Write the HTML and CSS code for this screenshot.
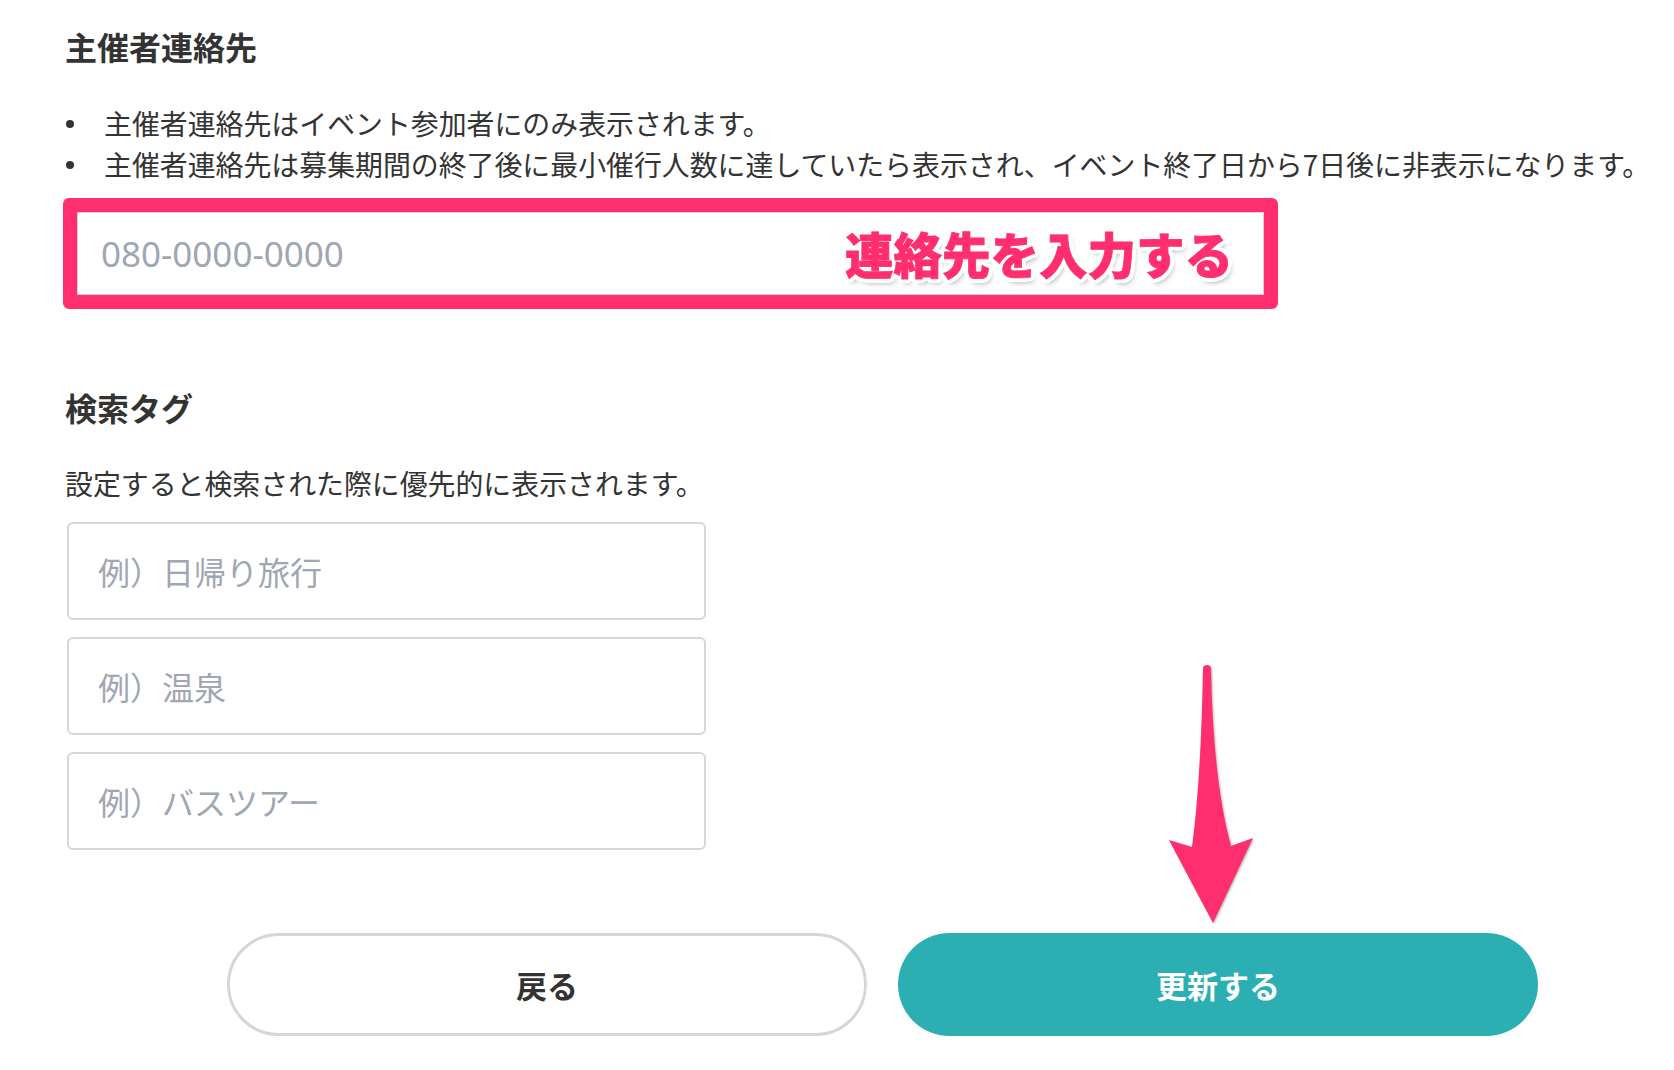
FILE: index.html
```html
<!DOCTYPE html>
<html lang="ja">
<head>
<meta charset="utf-8">
<title>イベント編集</title>
<link rel="stylesheet" href="styles.css">
</head>
<body>
<div class="page">
  <section class="sec contact">
    <h2 class="title">主催者連絡先</h2>
    <ul class="notes">
      <li>主催者連絡先はイベント参加者にのみ表示されます。</li>
      <li>主催者連絡先は募集期間の終了後に最小催行人数に達していたら表示され、イベント終了日から7日後に非表示になります。</li>
    </ul>
    <div class="highlight">
      <input class="phone-input" type="text" placeholder="080-0000-0000">
      <span class="callout">連絡先を入力する</span>
    </div>
  </section>

  <section class="sec tags">
    <h2 class="title title-tags">検索タグ</h2>
    <p class="desc">設定すると検索された際に優先的に表示されます。</p>
    <div class="tag-list">
      <input class="tag-input" type="text" placeholder="例）日帰り旅行">
      <input class="tag-input" type="text" placeholder="例）温泉">
      <input class="tag-input" type="text" placeholder="例）バスツアー">
    </div>
  </section>

  <div class="actions">
    <button class="btn btn-back" type="button">戻る</button>
    <button class="btn btn-submit" type="button">更新する</button>
  </div>

  <svg class="arrow" width="100" height="270" viewBox="0 0 100 270" aria-hidden="true">
    <path d="M43 9 A4 4 0 0 1 51 9 Q53 120 71 186 L93 178 L53 263 L9 180 L32 187 Q41 120 43 9 Z" fill="#ff2e6e"/>
  </svg>
</div>
</body>
</html>
```

FILE: styles.css
```css
* {
  box-sizing: border-box;
}

html, body {
  margin: 0;
  padding: 0;
  background: #ffffff;
}

body {
  font-family: "Noto Sans CJK JP", "Noto Sans", sans-serif;
  color: #333333;
}

.page {
  position: relative;
  width: 1674px;
  min-height: 1070px;
  padding: 22px 0 0 65px;
}

.title {
  margin: 0;
  font-size: 32px;
  line-height: 48px;
  font-weight: 700;
  color: #333333;
}

.notes {
  list-style: none;
  margin: 33px 0 0 0;
  padding: 0;
  font-size: 27.9px;
  line-height: 41px;
  white-space: nowrap;
}

.notes li {
  position: relative;
  padding-left: 39px;
}

.notes li::before {
  content: "";
  position: absolute;
  left: 1px;
  top: 17px;
  width: 8px;
  height: 8px;
  border-radius: 50%;
  background: #333333;
}

.highlight {
  position: relative;
  margin: 13px 0 0 -2px;
  width: 1215px;
  height: 111px;
  border: 14px solid #ff2e6e;
  border-radius: 6px;
  background: #ffffff;
}

.phone-input {
  display: block;
  width: 100%;
  height: 100%;
  margin: 0;
  border: 1px solid #d1d5db;
  padding: 0 0 0 23px;
  font-family: "Noto Sans", "Noto Sans CJK JP", sans-serif;
  font-size: 35px;
  color: #333333;
  background: #ffffff;
  outline: none;
}

.phone-input::placeholder,
.tag-input::placeholder {
  color: #a0a6b3;
  opacity: 1;
}

.callout {
  position: absolute;
  right: 31px;
  top: 50%;
  transform: translateY(-52%);
  font-size: 48.5px;
  line-height: 1;
  font-weight: 900;
  color: #ff2e6e;
  white-space: nowrap;
  -webkit-text-stroke: 0.8px #ff2e6e;
  text-shadow:
    4px 0 0 #fff, -4px 0 0 #fff, 0 4px 0 #fff, 0 -4px 0 #fff,
    3px 3px 0 #fff, -3px 3px 0 #fff, 3px -3px 0 #fff, -3px -3px 0 #fff,
    4px 2px 0 #fff, -4px 2px 0 #fff, 2px 4px 0 #fff, 2px -4px 0 #fff,
    4px -2px 0 #fff, -4px -2px 0 #fff, -2px 4px 0 #fff, -2px -4px 0 #fff,
    3px 5px 5px rgba(0, 0, 0, 0.3);
}

.title-tags {
  margin-top: 74px;
}

.desc {
  margin: 32px 0 0 0;
  font-size: 27.9px;
  line-height: 41px;
}

.tag-list {
  margin: 18px 0 0 2px;
  display: flex;
  flex-direction: column;
  gap: 17px;
}

.tag-input {
  display: block;
  width: 639px;
  height: 98px;
  margin: 0;
  border: 2px solid #d4d7dd;
  border-radius: 6px;
  padding: 0 0 0 29px;
  font-family: "Noto Sans CJK JP", sans-serif;
  font-size: 32px;
  color: #333333;
  background: #ffffff;
  outline: none;
}

.actions {
  display: flex;
  gap: 31px;
  margin: 83px 0 0 162px;
}

.btn {
  width: 640px;
  height: 103px;
  border-radius: 52px;
  font-family: "Noto Sans CJK JP", sans-serif;
  font-size: 31px;
  font-weight: 700;
  cursor: pointer;
  padding: 0;
}

.btn-back {
  background: #ffffff;
  border: 3px solid #d6d6d6;
  color: #333333;
}

.btn-submit {
  background: #2cafb3;
  border: none;
  color: #ffffff;
}

.arrow {
  position: absolute;
  left: 1160px;
  top: 660px;
  filter: drop-shadow(1px 1px 1px rgba(0, 0, 0, 0.3));
}
```
